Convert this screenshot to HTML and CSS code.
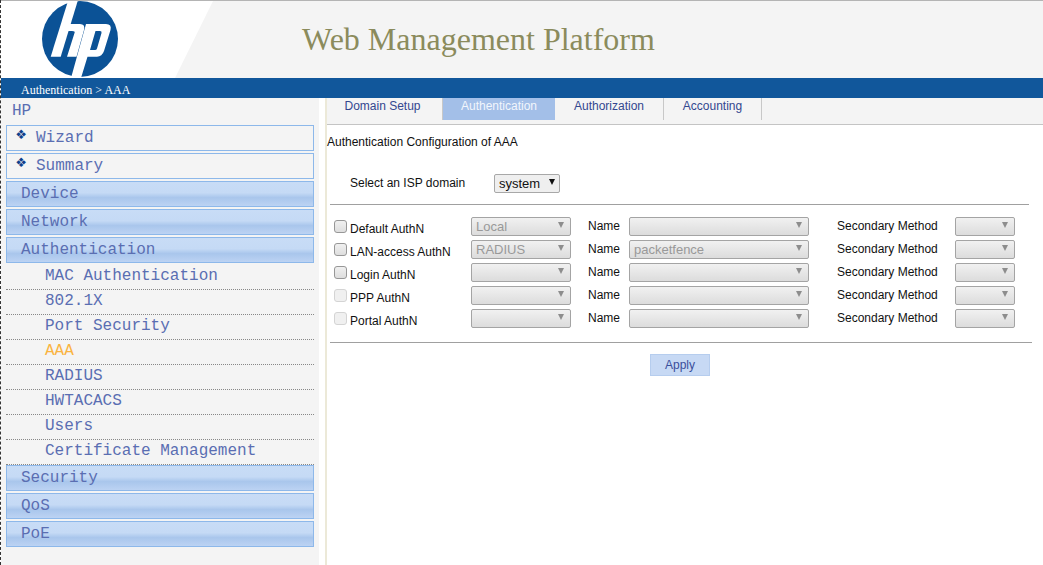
FILE: index.html
```html
<!DOCTYPE html>
<html lang="en">
<head>
    <meta charset="UTF-8">
    <meta name="viewport" content="width=device-width, initial-scale=1.0">
    <title>Web Management Platform</title>
    <link rel="stylesheet" href="styles.css">
</head>
<body>
    <div class="header">
        <div class="logo-area">
            <svg class="logo" width="78" height="78" viewBox="41 0 78 78">
                <circle cx="80" cy="39" r="38" fill="#0b5296"/>
                <path fill="#fff" d="M68.3 0L78 0L60.7 56.7L50.7 56.7Z"/>
                <path fill="#fff" d="M63 24L80 24Q85.5 24 84 30L76.5 56.7L67 56.7L74.5 33Q75.5 31 72 31L60 31Z"/>
                <path fill="#fff" fill-rule="evenodd" d="M86 24L106 24Q112 24 110.5 30L104 51Q102 56.7 97 56.7L87.5 56.7L81 78L71 78ZM95.500 31L90 50L95 50Q96.500 50 97 48.500L101.500 33Q102 31 100 31Z"/>
            </svg>
        </div>
        <div class="site-title">Web Management Platform</div>
    </div>
    <div class="crumb">Authentication &gt; AAA</div>

    <div class="page">
        <div class="sidebar">
            <div class="tree-root">HP</div>
            <div class="menu-box"><span class="bullet">❖</span>Wizard</div>
            <div class="menu-box"><span class="bullet">❖</span>Summary</div>
            <div class="menu-group">Device</div>
            <div class="menu-group">Network</div>
            <div class="menu-group">Authentication</div>
            <div class="sub-item">MAC Authentication</div>
            <div class="sub-item">802.1X</div>
            <div class="sub-item">Port Security</div>
            <div class="sub-item current">AAA</div>
            <div class="sub-item">RADIUS</div>
            <div class="sub-item">HWTACACS</div>
            <div class="sub-item">Users</div>
            <div class="sub-item">Certificate Management</div>
            <div class="menu-group">Security</div>
            <div class="menu-group">QoS</div>
            <div class="menu-group">PoE</div>
        </div>

        <div class="content">
            <div class="tabs">
                <div class="tab tab-domain">Domain Setup</div>
                <div class="tab tab-authn active">Authentication</div>
                <div class="tab tab-authz">Authorization</div>
                <div class="tab tab-acct">Accounting</div>
            </div>

            <div class="section-title">Authentication Configuration of AAA</div>

            <div class="domain-row">
                <span class="domain-label">Select an ISP domain</span>
                <span class="domain-select">system<i class="arrow-dark"></i></span>
            </div>

            <hr class="rule">

            <div class="auth-table">
                <label class="auth-name"><input type="checkbox">Default AuthN</label>
                <span class="select select-sm">Local</span>
                <span class="field-label">Name</span>
                <span class="select select-lg"></span>
                <span class="field-label wide">Secondary Method</span>
                <span class="select select-xs"></span>

                <label class="auth-name"><input type="checkbox">LAN-access AuthN</label>
                <span class="select select-sm">RADIUS</span>
                <span class="field-label">Name</span>
                <span class="select select-lg">packetfence</span>
                <span class="field-label wide">Secondary Method</span>
                <span class="select select-xs"></span>

                <label class="auth-name"><input type="checkbox">Login AuthN</label>
                <span class="select select-sm"></span>
                <span class="field-label">Name</span>
                <span class="select select-lg"></span>
                <span class="field-label wide">Secondary Method</span>
                <span class="select select-xs"></span>

                <label class="auth-name"><input type="checkbox" disabled>PPP AuthN</label>
                <span class="select select-sm"></span>
                <span class="field-label">Name</span>
                <span class="select select-lg"></span>
                <span class="field-label wide">Secondary Method</span>
                <span class="select select-xs"></span>

                <label class="auth-name"><input type="checkbox" disabled>Portal AuthN</label>
                <span class="select select-sm"></span>
                <span class="field-label">Name</span>
                <span class="select select-lg"></span>
                <span class="field-label wide">Secondary Method</span>
                <span class="select select-xs"></span>
            </div>

            <hr class="rule rule-bottom">

            <div class="actions">
                <button class="apply">Apply</button>
            </div>
        </div>
    </div>
</body>
</html>
```

FILE: styles.css
```css
html, body {
    height: 100%;
}
body {
    margin: 0;
    height: 565px;
    overflow: hidden;
    background: #fff;
    border-left: 1px dashed #333;
    box-sizing: border-box;
    font-family: "Liberation Sans", Arial, sans-serif;
}

/* header */
.header {
    display: flex;
    height: 78px;
    box-sizing: border-box;
    border-top: 1px solid #b4b4b4;
    background: #f4f4f4;
}
.logo-area {
    width: 212px;
    height: 77px;
    padding-left: 40px;
    box-sizing: border-box;
    background: #fff;
    clip-path: polygon(0 0, 100% 0, 174px 100%, 0 100%);
}
.logo {
    display: block;
    margin-top: -1px;
}
.site-title {
    margin-left: 89px;
    padding-top: 18px;
    font-family: "Liberation Serif", "Times New Roman", serif;
    font-size: 32px;
    line-height: 40px;
    color: #8b8b5c;
}
.crumb {
    height: 20px;
    padding: 4px 0 0 20px;
    box-sizing: border-box;
    background: #11579b;
    color: #fff;
    font-family: "Liberation Serif", "Times New Roman", serif;
    font-size: 12px;
    line-height: 16px;
}

/* left menu */
.page {
    display: flex;
    height: 467px;
}
.sidebar {
    width: 318px;
    padding: 0 5px;
    box-sizing: border-box;
    background: #f4f4f4;
    font-family: "Liberation Mono", "Courier New", monospace;
    font-size: 16px;
    color: #5a6eb2;
    flex-shrink: 0;
}
.tree-root {
    height: 27px;
    padding-left: 6px;
    line-height: 27px;
}
.menu-box, .menu-group {
    height: 26px;
    margin-bottom: 2px;
    box-sizing: border-box;
    border: 1px solid #8db8ea;
    line-height: 24px;
    white-space: nowrap;
}
.menu-box {
    padding-left: 9px;
}
.menu-group {
    padding-left: 14px;
    background: linear-gradient(#c8dcf6 0%, #c5daf5 45%, #a9c6ec 65%, #b4cdf0 85%, #bcd3f3 100%);
}
.bullet {
    display: inline-block;
    width: 20px;
    font-size: 17px;
    line-height: 14px;
    color: #0f3f8c;
    vertical-align: 3px;
}
.sub-item {
    height: 25px;
    padding-left: 39px;
    box-sizing: border-box;
    border-bottom: 1px dotted #888;
    line-height: 23px;
}
.sub-item:last-of-type {
    margin-bottom: 3px;
}
.sub-item.current {
    color: #fab340;
}

/* right side */
.content {
    flex: 1;
    margin-left: 6px;
    border-left: 2px solid #ece9d8;
    font-size: 12px;
    color: #111;
}
.tabs {
    display: flex;
    height: 27px;
    box-sizing: border-box;
    border-bottom: 1px solid #c4c4c4;
    background: #f4f4f4;
}
.tab {
    height: 22px;
    box-sizing: border-box;
    border-right: 1px solid #c8c8c8;
    color: #33478f;
    line-height: 16px;
    text-align: center;
}
.tab-domain {
    width: 116px;
    padding-right: 4px;
}
.tab-authn { width: 112px; border-right: 0; }
.tab-authz { width: 109px; }
.tab-acct { width: 98px; }
.tab.active {
    background: #a3bfe8;
    color: #f2f6fc;
}
.section-title {
    padding-top: 9px;
    line-height: 16px;
}
.domain-row {
    display: flex;
    align-items: center;
    height: 20px;
    margin-top: 23px;
    padding-left: 23px;
}
.domain-label {
    width: 144px;
}
.domain-select {
    display: flex;
    align-items: center;
    justify-content: space-between;
    width: 66px;
    height: 19px;
    padding: 0 4px;
    box-sizing: border-box;
    border: 1px solid #a8a8a8;
    border-radius: 2px;
    background: #efefef;
    font-size: 13px;
}
.arrow-dark {
    width: 0;
    height: 0;
    border: 3.5px solid transparent;
    border-top: 6px solid #111;
    border-bottom: 0;
    margin-top: -2px;
}
.rule {
    width: 699px;
    height: 0;
    margin: 11px 0 0 3px;
    border: 0;
    border-top: 1px solid #a0a0a0;
}
.rule-bottom {
    width: 702px;
    margin-top: 14px;
}
.auth-table {
    display: grid;
    grid-template-columns: 137px 100px 58px 180px 146px 60px;
    grid-auto-rows: 19px;
    row-gap: 4px;
    align-items: center;
    margin-top: 12px;
    padding-left: 7px;
}
.auth-name {
    display: flex;
    align-items: center;
    padding-top: 5px;
    white-space: nowrap;
}
.auth-name input {
    appearance: none;
    width: 13px;
    height: 13px;
    margin: -5px 3px 0 0;
    border: 1px solid #979797;
    border-radius: 3px;
    background: linear-gradient(#f0f0f0, #dedede);
}
.auth-name input:disabled {
    border-color: #d4d4d4;
    background: #f0f0f0;
}
.field-label {
    padding-left: 17px;
    padding-bottom: 1px;
}
.field-label.wide {
    padding-left: 28px;
}
.select {
    position: relative;
    display: block;
    height: 19px;
    padding-left: 4px;
    box-sizing: border-box;
    border: 1px solid #a4a4a4;
    border-radius: 2px;
    background: linear-gradient(#f1f1f1, #dcdcdc);
    color: #999;
    font-size: 13px;
    line-height: 17px;
}
.select::after {
    content: "";
    position: absolute;
    top: 4px;
    right: 6px;
    border: 3.5px solid transparent;
    border-top: 6px solid #8d8d8d;
    border-bottom: 0;
}
.actions {
    display: flex;
    padding: 11px 0 0 323px;
}
.apply {
    width: 60px;
    height: 22px;
    padding: 0;
    border: 1px solid #b6cdee;
    background: #c7d9f4;
    color: #3a4f9c;
    font-family: inherit;
    font-size: 12px;
}
```
